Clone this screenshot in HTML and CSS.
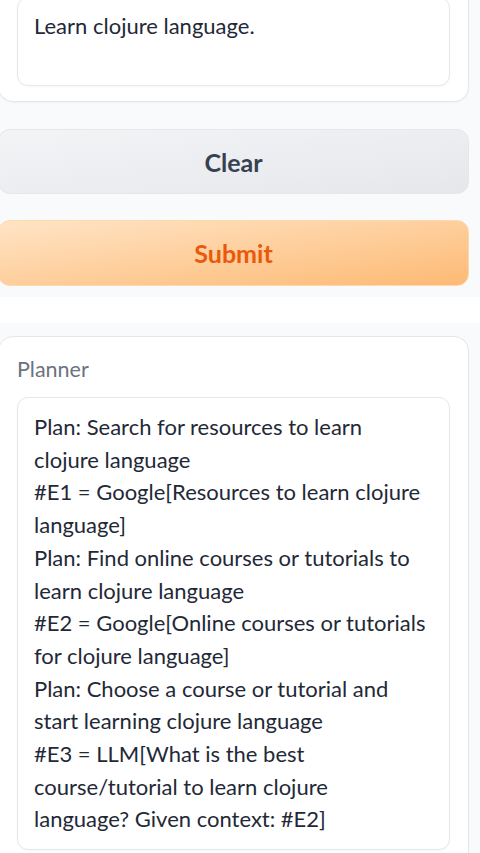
FILE: index.html
```html
<!DOCTYPE html>
<html lang="en">
<head>
<meta charset="utf-8">
<title>Planner</title>
<link rel="stylesheet" href="styles.css">
</head>
<body>
<div class="page">
  <div class="col col-top">
    <div class="panel panel-input">
      <div class="textbox textbox-input">Learn clojure language.</div>
    </div>
    <button class="btn btn-secondary">Clear</button>
    <button class="btn btn-primary">Submit</button>
  </div>
  <div class="col col-bottom">
    <div class="panel panel-output">
      <div class="label">Planner</div>
      <div class="textbox textbox-output">
        <div>Plan: Search for resources to learn</div>
        <div>clojure language</div>
        <div>#E1 = Google[Resources to learn clojure</div>
        <div>language]</div>
        <div>Plan: Find online courses or tutorials to</div>
        <div>learn clojure language</div>
        <div>#E2 = Google[Online courses or tutorials</div>
        <div>for clojure language]</div>
        <div>Plan: Choose a course or tutorial and</div>
        <div>start learning clojure language</div>
        <div>#E3 = LLM[What is the best</div>
        <div>course/tutorial to learn clojure</div>
        <div>language? Given context: #E2]</div>
      </div>
    </div>
  </div>
</div>
</body>
</html>
```

FILE: styles.css
```css
html, body {
  margin: 0;
  padding: 0;
  background: #ffffff;
  overflow: hidden;
}

body {
  font-family: Lato, "Noto Sans", sans-serif;
  color: #1f2937;
}

.page {
  width: 480px;
  height: 853px;
  overflow: hidden;
}

.col {
  background: #f9fafb;
  margin-left: -13px;
  width: 493px;
  box-sizing: border-box;
  padding: 0 11px;
  display: flex;
  flex-direction: column;
}

.col-top {
  margin-top: -22px;
  padding-bottom: 11px;
  gap: 26px;
}

.col-bottom {
  margin-top: 26px;
  padding-top: 13px;
  padding-bottom: 40px;
}

.panel {
  background: #ffffff;
  border: 1px solid #e5e7eb;
  border-radius: 15px;
  box-shadow: 0 1px 2px rgba(0, 0, 0, 0.04);
  padding: 17px 18px 15px 18px;
}

.textbox {
  border: 1px solid #e5e7eb;
  border-radius: 11px;
  background: #ffffff;
  font-size: 22px;
  line-height: 32.7px;
  color: #1f2937;
  padding: 12px 16px;
  white-space: nowrap;
  box-shadow: 0 1px 2px rgba(0, 0, 0, 0.03);
}

.textbox-input {
  height: 89px;
  box-sizing: border-box;
  margin-top: 1px;
}

.label {
  font-size: 21.5px;
  line-height: 30px;
  color: #6b7280;
  margin-bottom: 13px;
}

.textbox-output {
  padding-top: 13px;
  padding-bottom: 13px;
}

.btn {
  display: block;
  width: 100%;
  font-family: Lato, "Noto Sans", sans-serif;
  font-weight: 700;
  font-size: 25px;
  border-radius: 12px;
  cursor: pointer;
  box-sizing: border-box;
}

.btn-secondary {
  height: 65px;
  margin-top: 1px;
  color: #374151;
  border: 1px solid #e5e7eb;
  background: linear-gradient(to bottom right, #f3f4f6, #e5e7eb);
}

.btn-primary {
  height: 66px;
  color: #ea580c;
  border: 1px solid #fed7aa;
  background: linear-gradient(to bottom right, #ffe4c6, #fdba74);
}
```
